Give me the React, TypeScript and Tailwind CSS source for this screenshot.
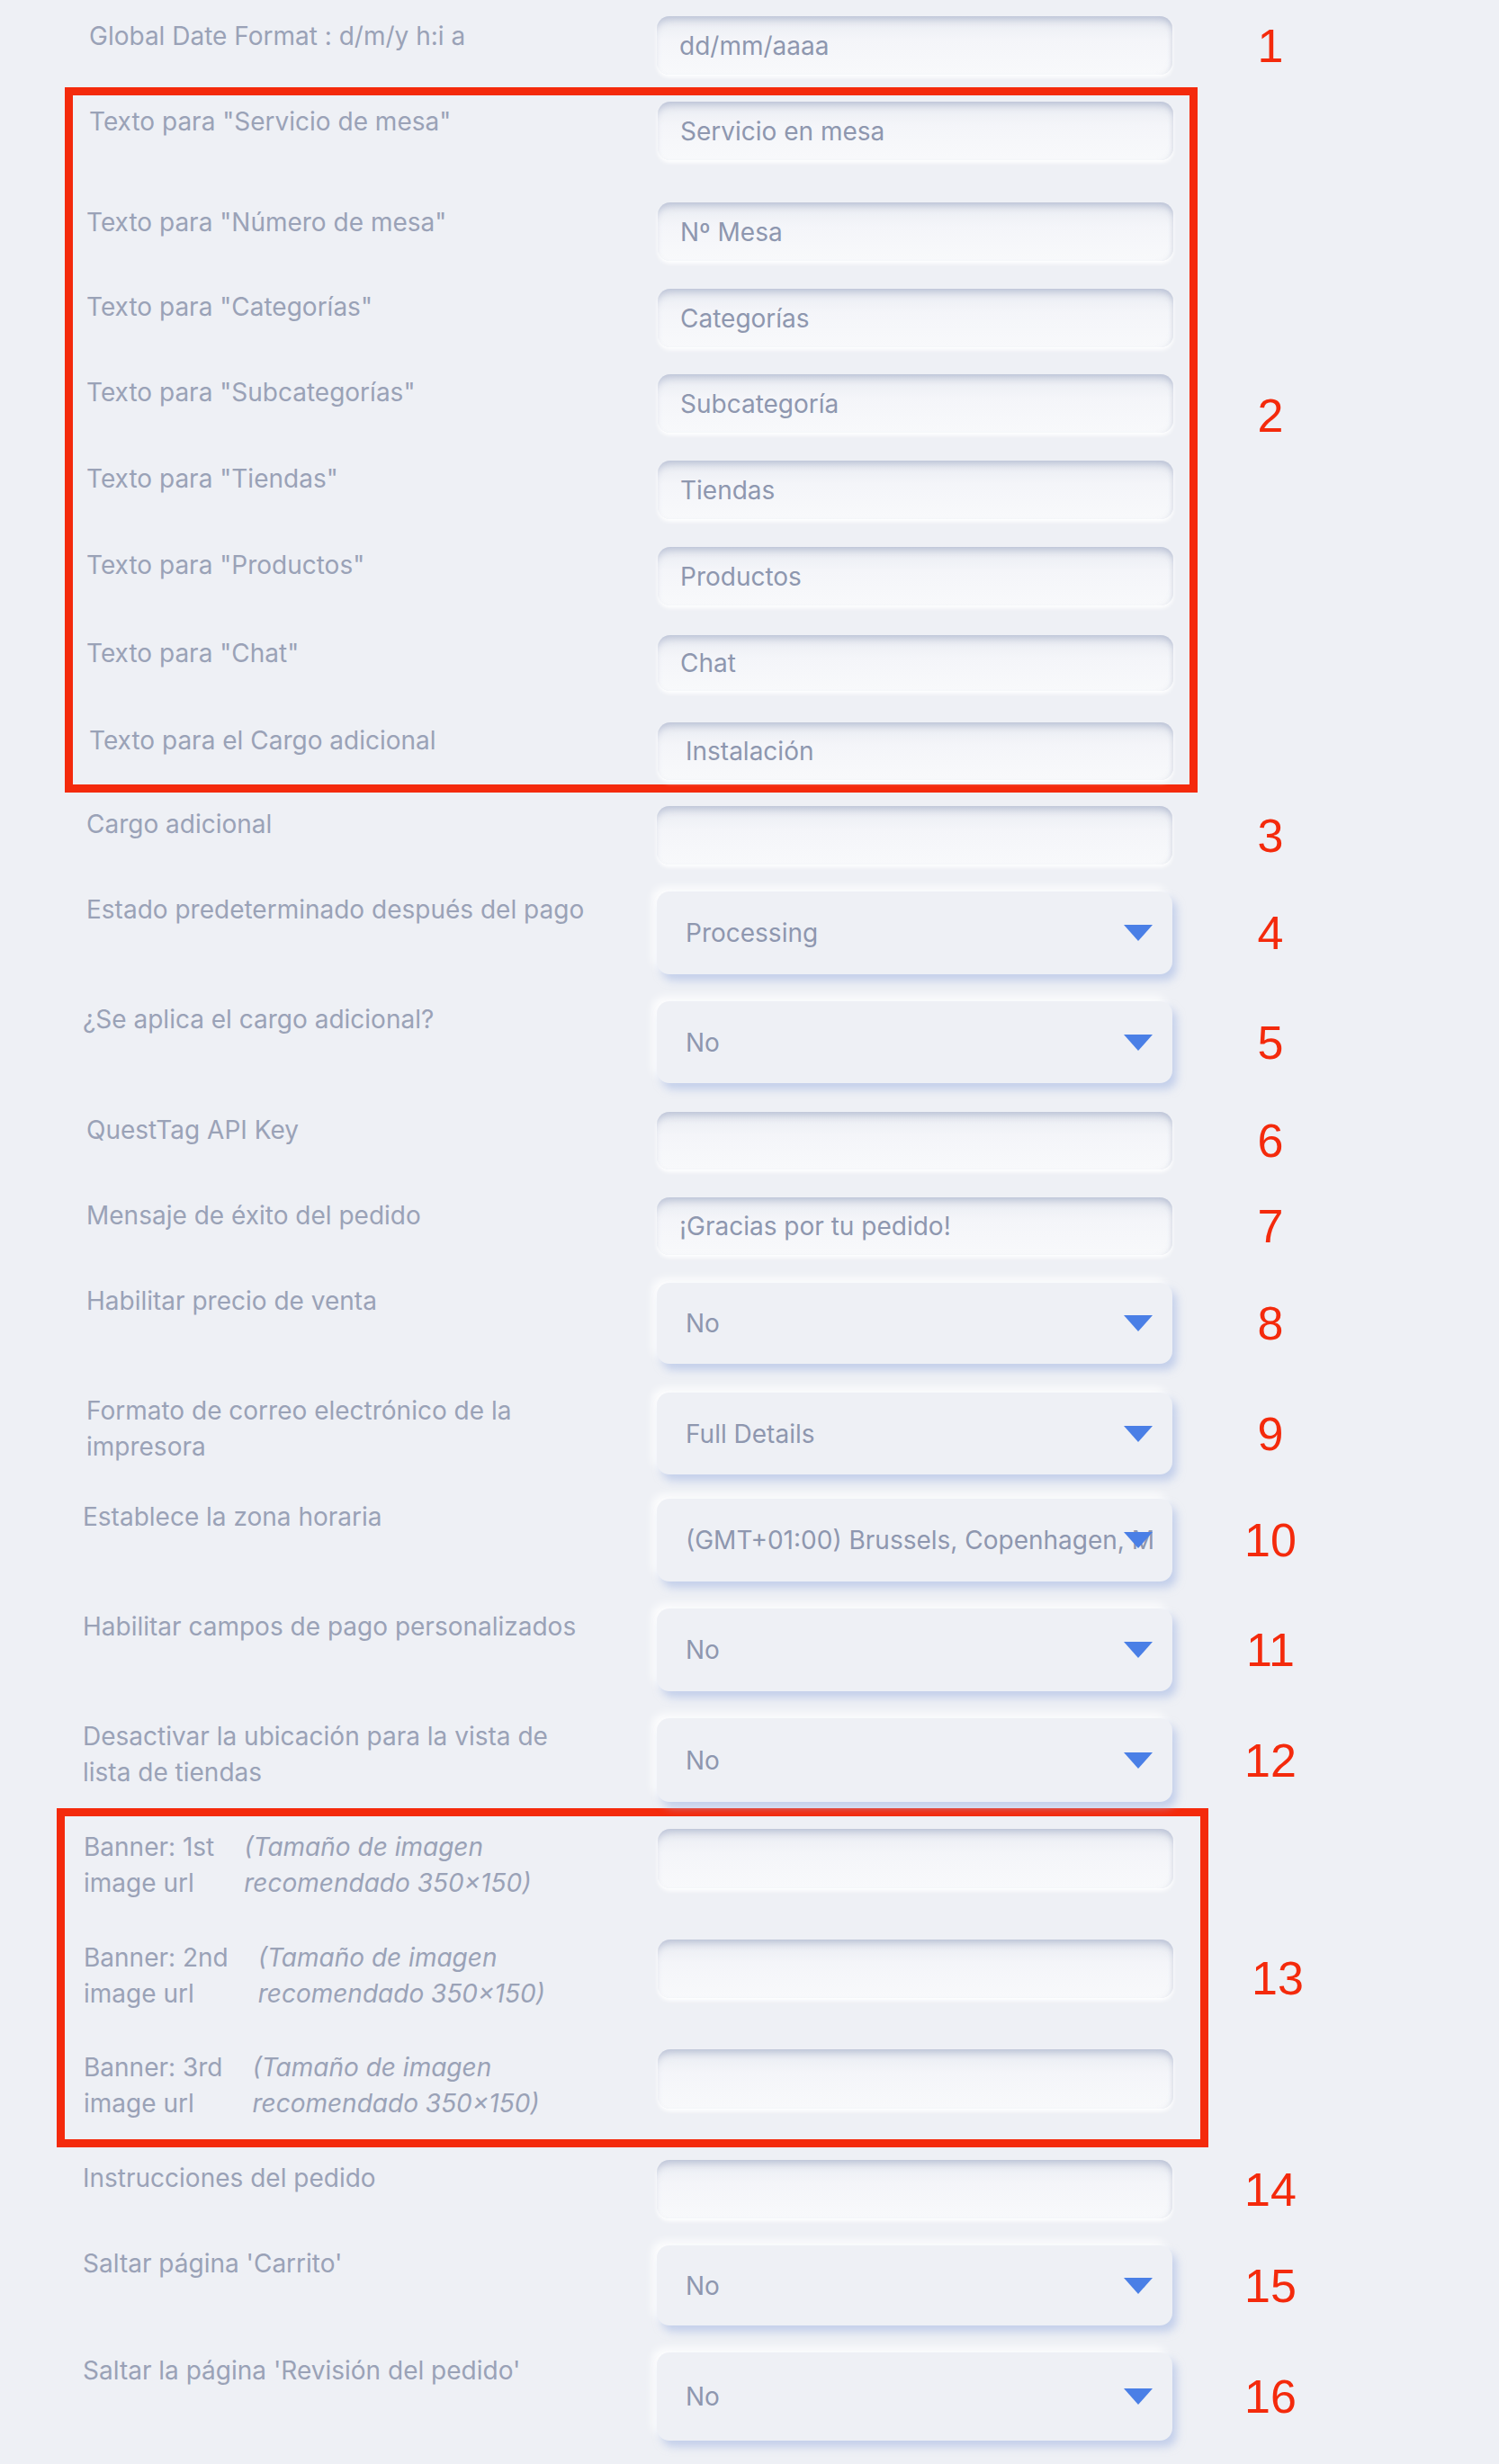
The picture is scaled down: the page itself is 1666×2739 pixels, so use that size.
import React from 'react';

type FieldProps = {
  value?: string;
  h?: string;
  pl?: string;
};

function TextField({ value = '', h = 'h-[65px]', pl = 'pl-[25px]' }: FieldProps) {
  return (
    <div
      className={`${h} ${pl} w-[573px] shrink-0 flex items-center rounded-[14px] bg-[linear-gradient(180deg,#e9ecf2_0%,#f4f5f9_40%,#f8f9fb_100%)] shadow-[inset_0_8px_8px_-4px_rgba(150,160,192,0.55),inset_-4px_0_6px_-4px_rgba(170,178,200,0.35),0_3px_4px_rgba(255,255,255,0.95)] text-[28px] text-[#8e97af] whitespace-nowrap`}
    >
      {value}
    </div>
  );
}

function SelectField({ value, h = 'h-[92px]' }: { value: string; h?: string }) {
  return (
    <div
      className={`${h} relative w-[573px] shrink-0 rounded-[14px] bg-[#eef0f5] shadow-[5px_7px_10px_rgba(160,180,226,0.55),-5px_-5px_10px_rgba(255,255,255,0.9)]`}
    >
      <div className="h-full flex items-center pl-[32px] pr-[22px]">
        <div className="overflow-hidden whitespace-nowrap text-[28px] text-[#8e97af]">{value}</div>
      </div>
      <svg
        width="32"
        height="18"
        viewBox="0 0 32 18"
        className="absolute right-[22px] top-1/2 -translate-y-1/2"
      >
        <polygon points="0,0 32,0 16,18" fill="#4a7fe6" />
      </svg>
    </div>
  );
}

function Num({ n, w = 'w-[218px]' }: { n: string; w?: string }) {
  return (
    <div className={`${w} shrink-0 text-center font-['Liberation_Sans',Arial,sans-serif] text-[52px] leading-none text-[#f42a0c]`}>
      {n}
    </div>
  );
}

type RowProps = {
  label: React.ReactNode;
  children: React.ReactNode;
  num?: string;
  mt?: string;
  pl?: string;
  lw?: string;
  lpt?: string;
};

function Row({ label, children, num, mt = '', pl = 'pl-[96px]', lw = 'w-[730px]', lpt = '' }: RowProps) {
  return (
    <div className={`flex items-start ${mt}`}>
      <div className={`${lw} ${pl} ${lpt} shrink-0 pr-[40px] text-[28px] leading-[40px] text-[#9aa2b7]`}>
        {label}
      </div>
      <div className="flex items-center">
        {children}
        {num && <Num n={num} />}
      </div>
    </div>
  );
}

function BannerLabel({ which }: { which: string }) {
  return (
    <div className="flex gap-[33px]">
      <span>
        Banner: {which}
        <br />
        image url
      </span>
      <span className="italic">
        (Tamaño de imagen
        <br />
        recomendado 350×150)
      </span>
    </div>
  );
}

export default function App() {
  const box1 = 'w-[650px]';
  const box2 = 'w-[659px]';

  return (
    <div className="min-h-[2739px] w-full bg-[#eef0f5] pt-[18px] font-['Inter',sans-serif]">
      <Row label="Global Date Format : d/m/y h:i a" pl="pl-[99px]" lpt="pt-[2px]" num="1">
        <TextField value="dd/mm/aaaa" />
      </Row>

      {/* annotated group 2 */}
      <div className="flex items-start mt-[14px]">
        <div className="ml-[72px] w-[1259px] shrink-0 border-[9px] border-[#f42a0c] pt-[7px] pb-[5px]">
          <Row label={'Texto para "Servicio de mesa"'} lw={box1} pl="pl-[18px]" lpt="pt-[2px]">
            <TextField value="Servicio en mesa" />
          </Row>
          <Row label={'Texto para "Número de mesa"'} lw={box1} pl="pl-[15px]" mt="mt-[47px]" lpt="pt-[2px]">
            <TextField value="Nº Mesa" />
          </Row>
          <Row label={'Texto para "Categorías"'} lw={box1} pl="pl-[15px]" mt="mt-[31px]">
            <TextField value="Categorías" />
          </Row>
          <Row label={'Texto para "Subcategorías"'} lw={box1} pl="pl-[15px]" mt="mt-[30px]">
            <TextField value="Subcategoría" />
          </Row>
          <Row label={'Texto para "Tiendas"'} lw={box1} pl="pl-[15px]" mt="mt-[31px]">
            <TextField value="Tiendas" />
          </Row>
          <Row label={'Texto para "Productos"'} lw={box1} pl="pl-[15px]" mt="mt-[31px]">
            <TextField value="Productos" />
          </Row>
          <Row label={'Texto para "Chat"'} lw={box1} pl="pl-[15px]" mt="mt-[33px]">
            <TextField value="Chat" h="h-[62px]" />
          </Row>
          <Row label="Texto para el Cargo adicional" lw={box1} pl="pl-[18px]" mt="mt-[35px]">
            <TextField value="Instalación" h="h-[64px]" pl="pl-[31px]" />
          </Row>
        </div>
        <div className="flex-1 mt-[339px]">
          <Num n="2" w="w-[162px]" />
        </div>
      </div>

      <Row label="Cargo adicional" mt="mt-[15px]" num="3">
        <TextField />
      </Row>
      <Row label="Estado predeterminado después del pago" mt="mt-[30px]" num="4">
        <SelectField value="Processing" />
      </Row>
      <Row label="¿Se aplica el cargo adicional?" mt="mt-[30px]" pl="pl-[92px]" num="5">
        <SelectField value="No" h="h-[91px]" />
      </Row>
      <Row label="QuestTag API Key" mt="mt-[32px]" num="6">
        <TextField h="h-[64px]" />
      </Row>
      <Row label="Mensaje de éxito del pedido" mt="mt-[31px]" num="7">
        <TextField value="¡Gracias por tu pedido!" h="h-[64px]" />
      </Row>
      <Row label="Habilitar precio de venta" mt="mt-[31px]" num="8">
        <SelectField value="No" h="h-[90px]" />
      </Row>
      <Row
        label={
          <>
            Formato de correo electrónico de la
            <br />
            impresora
          </>
        }
        mt="mt-[32px]"
        num="9"
      >
        <SelectField value="Full Details" h="h-[91px]" />
      </Row>
      <Row label="Establece la zona horaria" mt="mt-[27px]" pl="pl-[92px]" num="10">
        <SelectField value="(GMT+01:00) Brussels, Copenhagen, Madrid, Paris" />
      </Row>
      <Row label="Habilitar campos de pago personalizados" mt="mt-[30px]" pl="pl-[92px]" num="11">
        <SelectField value="No" />
      </Row>
      <Row
        label={
          <>
            Desactivar la ubicación para la vista de
            <br />
            lista de tiendas
          </>
        }
        mt="mt-[30px]"
        pl="pl-[92px]"
        num="12"
      >
        <SelectField value="No" h="h-[93px]" />
      </Row>

      {/* annotated group 13 */}
      <div className="flex items-center mt-[7px]">
        <div className="ml-[63px] w-[1280px] shrink-0 border-[9px] border-[#f42a0c] pt-[14px] pb-[20px]">
          <Row label={<BannerLabel which="1st" />} lw={box2} pl="pl-[21px]">
            <TextField h="h-[66px]" />
          </Row>
          <Row label={<BannerLabel which="2nd" />} lw={box2} pl="pl-[21px]" mt="mt-[43px]">
            <TextField />
          </Row>
          <Row label={<BannerLabel which="3rd" />} lw={box2} pl="pl-[21px]" mt="mt-[42px]">
            <TextField h="h-[66px]" />
          </Row>
        </div>
        <Num n="13" w="w-[154px]" />
      </div>

      <Row label="Instrucciones del pedido" mt="mt-[14px]" pl="pl-[92px]" num="14">
        <TextField />
      </Row>
      <Row label="Saltar página 'Carrito'" mt="mt-[30px]" pl="pl-[92px]" num="15">
        <SelectField value="No" h="h-[89px]" />
      </Row>
      <Row label="Saltar la página 'Revisión del pedido'" mt="mt-[30px]" pl="pl-[92px]" num="16">
        <SelectField value="No" h="h-[98px]" />
      </Row>
    </div>
  );
}
